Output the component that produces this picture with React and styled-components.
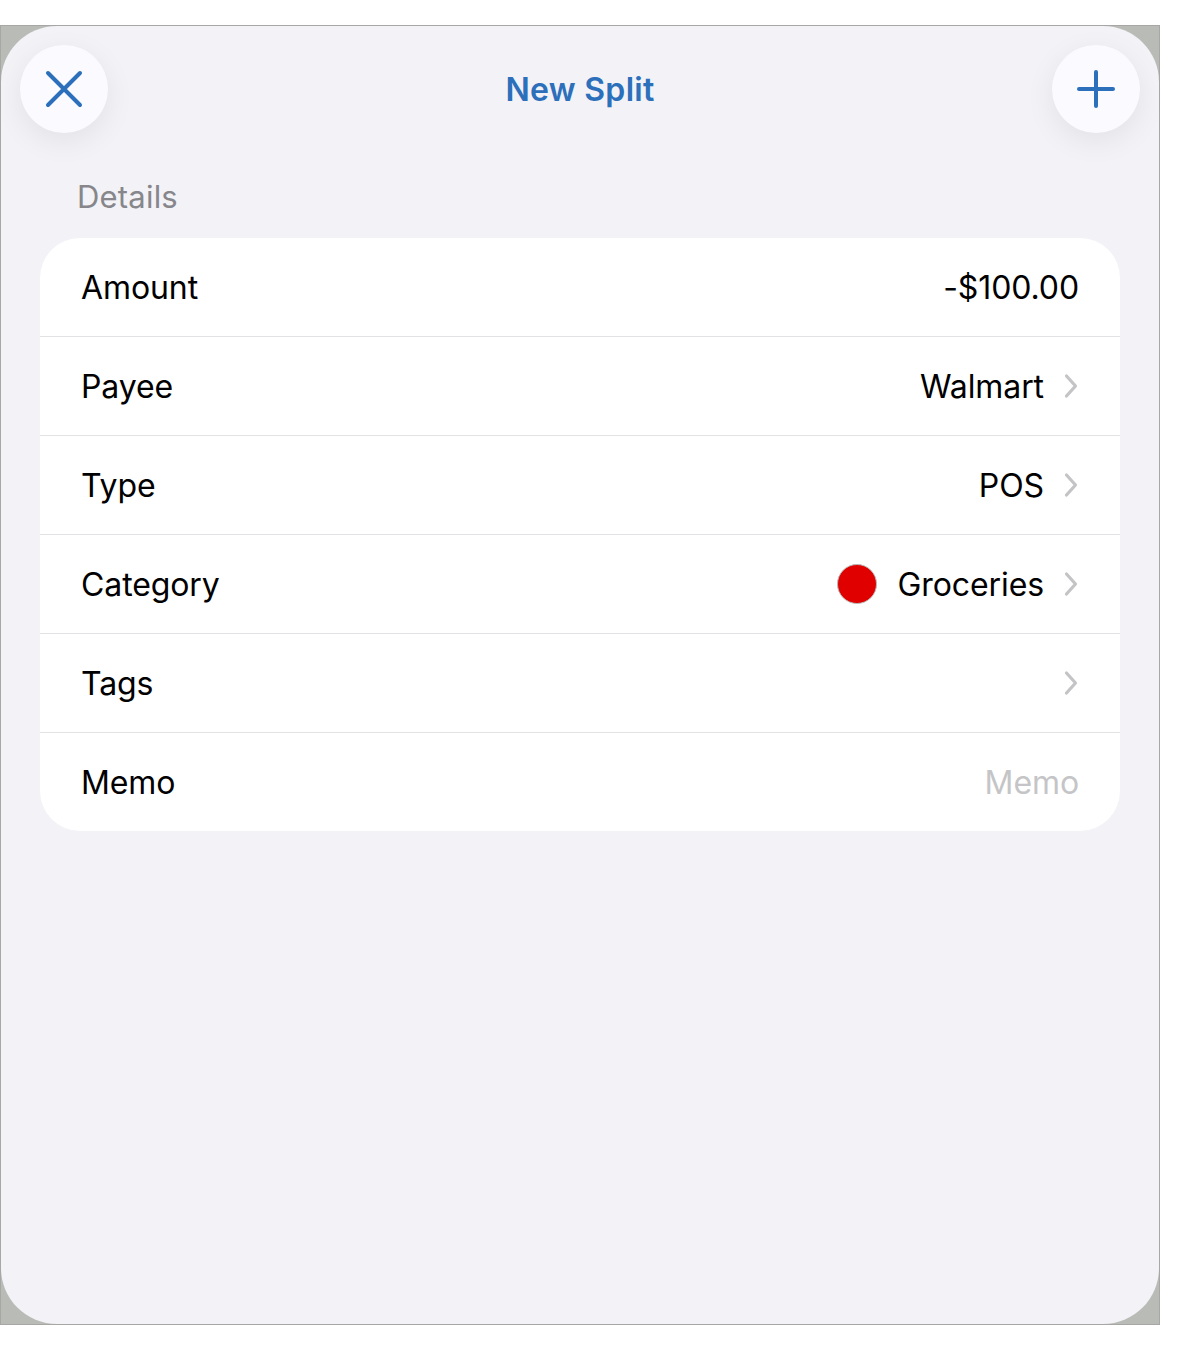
import React from 'react';
import styled, { createGlobalStyle } from 'styled-components';

const GlobalStyle = createGlobalStyle`
  html, body {
    margin: 0;
    padding: 0;
    background: #ffffff;
    font-family: Inter, "Liberation Sans", sans-serif;
    -webkit-font-smoothing: antialiased;
  }
`;

const Page = styled.div`
  padding-top: 25px;
  width: 1160px;
`;

const Frame = styled.div`
  box-sizing: border-box;
  width: 1160px;
  height: 1300px;
  border: 1px solid #a7a8a6;
  background: #b9bbb7;
`;

const Sheet = styled.div`
  height: 100%;
  background: #f2f2f7;
  border-radius: 56px;
  display: flex;
  flex-direction: column;
`;

const Header = styled.div`
  display: flex;
  align-items: center;
  justify-content: space-between;
  padding: 19px 19px 0 19px;
  height: 88px;
`;

const RoundButton = styled.button`
  width: 88px;
  height: 88px;
  border-radius: 50%;
  border: none;
  background: #fafaff;
  box-shadow: 0 8px 30px rgba(0, 0, 0, 0.07);
  display: flex;
  align-items: center;
  justify-content: center;
  padding: 0;
`;

const Title = styled.div`
  font-size: 32px;
  font-weight: 600;
  color: #2c6fba;
  letter-spacing: 0.3px;
`;

const SectionLabel = styled.div`
  margin: 45px 0 0 76px;
  font-size: 31px;
  color: #86868b;
  letter-spacing: 0.2px;
`;

const Card = styled.div`
  margin: 23px 39px 0 39px;
  background: #ffffff;
  border-radius: 40px;
  overflow: hidden;
`;

const Row = styled.div`
  height: 98px;
  display: flex;
  align-items: center;
  justify-content: space-between;
  padding: 0 41px 0 41px;
  border-top: ${(p) => (p.$first ? 'none' : '1.5px solid #e2e2e4')};
`;

const Label = styled.div`
  font-size: 32px;
  color: #000000;
  letter-spacing: -0.1px;
`;

const Value = styled.div`
  display: flex;
  align-items: center;
  font-size: 32px;
  color: ${(p) => (p.$placeholder ? '#c5c5c7' : '#000000')};
  letter-spacing: -0.1px;
`;

const Dot = styled.span`
  width: 40px;
  height: 40px;
  border-radius: 50%;
  background: #e00000;
  border: 1px solid #b8b8b8;
  box-sizing: border-box;
  margin-right: 21px;
`;

const ChevronWrap = styled.span`
  display: flex;
  margin-left: 19px;
`;

const Chevron = () => (
  <ChevronWrap>
    <svg width="16" height="26" viewBox="0 0 16 26">
      <path d="M3.5 3 L12.5 13 L3.5 23" fill="none" stroke="#c4c4c7" strokeWidth="3.2" strokeLinecap="round" strokeLinejoin="round" />
    </svg>
  </ChevronWrap>
);

const CloseIcon = () => (
  <svg width="38" height="38" viewBox="0 0 38 38">
    <path d="M3 3 L35 35 M35 3 L3 35" stroke="#2c6fba" strokeWidth="4" strokeLinecap="round" />
  </svg>
);

const PlusIcon = () => (
  <svg width="38" height="38" viewBox="0 0 38 38">
    <path d="M19 2 L19 36 M2 19 L36 19" stroke="#2c6fba" strokeWidth="4" strokeLinecap="round" />
  </svg>
);

const rows = [
  { label: 'Amount', value: '-$100.00' },
  { label: 'Payee', value: 'Walmart', chevron: true },
  { label: 'Type', value: 'POS', chevron: true },
  { label: 'Category', value: 'Groceries', chevron: true, dot: true },
  { label: 'Tags', value: '', chevron: true },
  { label: 'Memo', value: 'Memo', placeholder: true },
];

export default function App() {
  return (
    <Page>
      <GlobalStyle />
      <Frame>
        <Sheet>
          <Header>
            <RoundButton>
              <CloseIcon />
            </RoundButton>
            <Title>New Split</Title>
            <RoundButton>
              <PlusIcon />
            </RoundButton>
          </Header>
          <SectionLabel>Details</SectionLabel>
          <Card>
            {rows.map((r, i) => (
              <Row key={r.label} $first={i === 0}>
                <Label>{r.label}</Label>
                <Value $placeholder={r.placeholder}>
                  {r.dot && <Dot />}
                  {r.value}
                  {r.chevron && <Chevron />}
                </Value>
              </Row>
            ))}
          </Card>
        </Sheet>
      </Frame>
    </Page>
  );
}
